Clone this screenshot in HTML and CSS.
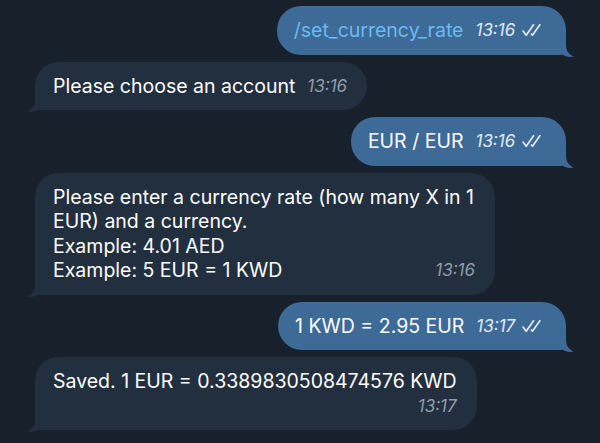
FILE: index.html
```html
<!DOCTYPE html>
<html lang="en">
<head>
    <meta charset="UTF-8">
    <meta name="viewport" content="width=device-width, initial-scale=1.0">
    <title>Chat</title>
    <link rel="stylesheet" href="styles.css">
</head>
<body>
    <div class="chat">
        <div class="msg out">
            <span class="command">/set_currency_rate</span>
            <span class="meta">13:16
                <svg class="ticks" viewBox="0 0 20 13"><path d="M1 7.5 L4 11.5 L11 1.5 M9 10.5 L10 11.5 L17 1.5"/></svg>
            </span>
            <svg class="tail" viewBox="0 0 20 22"><path d="M0 0 H12 V10 C12 16 15 19.5 20 21.5 C15 22.5 11 21.5 8.5 19.5 C6.5 20 4 20 0 20 Z"/></svg>
        </div>

        <div class="msg in">
            Please choose an account
            <span class="meta">13:16</span>
            <svg class="tail" viewBox="0 0 20 22"><path d="M0 0 H12 V10 C12 16 15 19.5 20 21.5 C15 22.5 11 21.5 8.5 19.5 C6.5 20 4 20 0 20 Z"/></svg>
        </div>

        <div class="msg out">
            EUR / EUR
            <span class="meta">13:16
                <svg class="ticks" viewBox="0 0 20 13"><path d="M1 7.5 L4 11.5 L11 1.5 M9 10.5 L10 11.5 L17 1.5"/></svg>
            </span>
            <svg class="tail" viewBox="0 0 20 22"><path d="M0 0 H12 V10 C12 16 15 19.5 20 21.5 C15 22.5 11 21.5 8.5 19.5 C6.5 20 4 20 0 20 Z"/></svg>
        </div>

        <div class="msg in">
            Please enter a currency rate (how many X in 1 EUR) and a currency.<br>
            Example: 4.01 AED<br>
            Example: 5 EUR = 1 KWD
            <span class="meta">13:16</span>
            <svg class="tail" viewBox="0 0 20 22"><path d="M0 0 H12 V10 C12 16 15 19.5 20 21.5 C15 22.5 11 21.5 8.5 19.5 C6.5 20 4 20 0 20 Z"/></svg>
        </div>

        <div class="msg out">
            1 KWD = 2.95 EUR
            <span class="meta">13:17
                <svg class="ticks" viewBox="0 0 20 13"><path d="M1 7.5 L4 11.5 L11 1.5 M9 10.5 L10 11.5 L17 1.5"/></svg>
            </span>
            <svg class="tail" viewBox="0 0 20 22"><path d="M0 0 H12 V10 C12 16 15 19.5 20 21.5 C15 22.5 11 21.5 8.5 19.5 C6.5 20 4 20 0 20 Z"/></svg>
        </div>

        <div class="msg in">
            Saved. 1 EUR = 0.3389830508474576 KWD
            <span class="meta below">13:17</span>
            <svg class="tail" viewBox="0 0 20 22"><path d="M0 0 H12 V10 C12 16 15 19.5 20 21.5 C15 22.5 11 21.5 8.5 19.5 C6.5 20 4 20 0 20 Z"/></svg>
        </div>
    </div>
</body>
</html>
```

FILE: styles.css
```css
body {
    margin: 0;
    background-color: #18202b;
    font-family: Inter, "Noto Sans", sans-serif;
    color: #fff;
    height: 443px;
    overflow: hidden;
}
.chat {
    display: flex;
    flex-direction: column;
    gap: 7px;
    padding: 6px 34px 0 35px;
}
.msg {
    position: relative;
    max-width: 422px;
    padding: 12px 20px 12px 18px;
    border-radius: 24px;
    font-size: 19.5px;
    line-height: 24.5px;
}
.msg.in {
    align-self: flex-start;
    background-color: #222f3e;
    border-bottom-left-radius: 6px;
}
.msg.out {
    align-self: flex-end;
    background-color: #3d6a97;
    border-bottom-right-radius: 6px;
    padding-right: 23px;
    padding-left: 17px;
}
.command {
    color: #6cbaf3;
}
.meta {
    float: right;
    margin-left: 12px;
    font-size: 17px;
    font-style: italic;
    line-height: 24.5px;
    color: #8f9cab;
}
/* time that does not fit next to the text goes on its own line */
.meta.below {
    float: none;
    display: block;
    text-align: right;
    margin-left: 0;
}
.out .meta {
    color: #e2ebf4;
}
.ticks {
    width: 21px;
    height: 14px;
    margin-left: 2px;
    vertical-align: -1px;
    fill: none;
    stroke: #e2ebf4;
    stroke-width: 1.6;
    stroke-linecap: round;
    stroke-linejoin: round;
}
.tail {
    position: absolute;
    bottom: -2px;
    width: 20px;
    height: 22px;
}
.out .tail {
    right: -8px;
    fill: #3d6a97;
}
.in .tail {
    left: -8px;
    transform: scaleX(-1);
    fill: #222f3e;
}
```
